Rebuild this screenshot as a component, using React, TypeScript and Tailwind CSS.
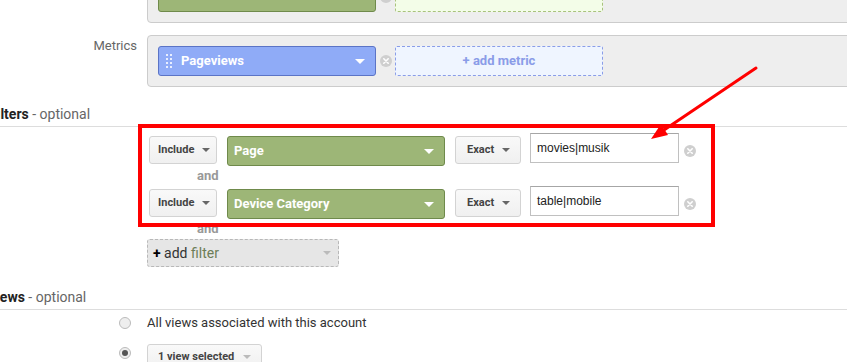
import React from "react";

function RemoveIcon() {
  return (
    <svg width="12" height="12" viewBox="0 0 12 12" className="shrink-0">
      <circle cx="6" cy="6" r="6" fill="#cfcfcf" />
      <path d="M3.8 3.8L8.2 8.2M8.2 3.8L3.8 8.2" stroke="#fff" strokeWidth="1.6" strokeLinecap="round" />
    </svg>
  );
}

function DragDots() {
  return (
    <div className="grid grid-cols-2 gap-x-[2px] gap-y-[2px] w-[6px]">
      {Array.from({ length: 8 }).map((_, i) => (
        <span key={i} className="w-[2px] h-[2px] bg-[#e8eeff]" />
      ))}
    </div>
  );
}

function DarkCaret() {
  return <span className="w-0 h-0 border-l-[4px] border-r-[4px] border-t-[4px] border-l-transparent border-r-transparent border-t-[#666]" />;
}

function WhiteCaret() {
  return <span className="w-0 h-0 border-l-[5px] border-r-[5px] border-t-[5px] border-l-transparent border-r-transparent border-t-white" />;
}

function LightCaret() {
  return <span className="w-0 h-0 border-l-[4px] border-r-[4px] border-t-[4px] border-l-transparent border-r-transparent border-t-[#bbb]" />;
}

function FilterRow({ field, value }: { field: string; value: string }) {
  return (
    <div className="flex items-start h-[33px]">
      <div className="ml-[2px] mt-[3px] w-[68px] h-[28px] flex items-center justify-between pl-[8px] pr-[6px] bg-linear-to-b from-[#f9f9f9] to-[#f0f0f0] border border-[#d3d3d3] rounded-[3px] text-[11px] font-bold text-[#444]">
        <span>Include</span>
        <DarkCaret />
      </div>
      <div className="ml-[10px] mt-[3px] w-[218px] h-[30px] flex items-center justify-between pl-[6px] pr-[10px] bg-[#9db677] border border-[#6f8a4b] rounded-[3px] text-[13px] font-bold text-white">
        <span>{field}</span>
        <WhiteCaret />
      </div>
      <div className="ml-[10px] mt-[3px] w-[66px] h-[28px] flex items-center justify-between pl-[11px] pr-[10px] bg-linear-to-b from-[#f9f9f9] to-[#f0f0f0] border border-[#d3d3d3] rounded-[3px] text-[11px] font-bold text-[#444]">
        <span>Exact</span>
        <DarkCaret />
      </div>
      <div className="ml-[9px] w-[149px] h-[30px] flex items-center px-[6px] bg-white border border-[#c0c0c0] border-t-[#a6a6a6] text-[12px] text-[#222] font-['Liberation_Sans',sans-serif]">
        {value}
      </div>
      <div className="ml-[5px] mt-[12px]">
        <RemoveIcon />
      </div>
    </div>
  );
}

export default function App() {
  return (
    <div className="relative w-[847px] h-[362px] overflow-hidden bg-white font-['Roboto',sans-serif]">
      <div className="-mt-[29px]">
        {/* Dimensions row (cut off) */}
        <div className="flex">
          <div className="w-[137px] shrink-0" />
          <div className="ml-[10px] flex-1 -mr-[20px] h-[52px] border border-[#cccccc] rounded-[4px] bg-[#eeeeee] px-[10px] flex items-center">
            <div className="w-[218px] h-[30px] flex items-center pl-[7px] pb-[9px] bg-[#9db677] border border-[#6f8a4b] rounded-[3px] text-[13px] font-bold text-white">
              <DragDots />
              <span className="ml-[9px]">Country</span>
            </div>
            <div className="ml-[4px]">
              <RemoveIcon />
            </div>
            <div className="ml-[3px] w-[208px] h-[30px] bg-[#f3fde8] border border-dashed border-[#a9c27d] rounded-[2px]" />
          </div>
        </div>

        {/* Metrics row */}
        <div className="flex mt-[12px]">
          <div className="w-[137px] shrink-0 text-right text-[13px] text-[#666] leading-[20px] pt-[1px]">Metrics</div>
          <div className="ml-[10px] flex-1 -mr-[20px] h-[52px] border border-[#cccccc] rounded-[4px] bg-[#eeeeee] px-[10px] flex items-center">
            <div className="w-[218px] h-[30px] flex items-center justify-between pl-[7px] pr-[10px] bg-[#8fabf7] border border-[#5b74c6] rounded-[3px] text-[13px] font-bold text-white">
              <div className="flex items-center">
                <DragDots />
                <span className="ml-[9px]">Pageviews</span>
              </div>
              <WhiteCaret />
            </div>
            <div className="ml-[4px]">
              <RemoveIcon />
            </div>
            <div className="ml-[3px] w-[208px] h-[30px] flex items-center justify-center bg-[#eff5ff] border border-dashed border-[#8a9de8] rounded-[2px] text-[13px] font-bold text-[#8a9ce8]">
              + add metric
            </div>
          </div>
        </div>

        {/* Filters heading */}
        <div className="mt-[17px] -ml-[11px] h-[23px] border-b border-[#dddddd] text-[14px] leading-[20px]">
          <span className="font-bold text-[#222]">Filters</span>
          <span className="text-[#666]"> - optional</span>
        </div>

        {/* Filters */}
        <div className="flex flex-col pl-[147px] mt-[6px]">
          <FilterRow field="Page" value="movies|musik" />
          <div className="h-[20px] leading-[20px] ml-[50px] text-[13px] font-bold text-[#999]">and</div>
          <FilterRow field="Device Category" value="table|mobile" />
          <div className="h-[20px] leading-[20px] ml-[50px] text-[13px] font-bold text-[#999]">and</div>
          <div className="w-[192px] h-[28px] flex items-center justify-between pl-[5px] pr-[7px] bg-[#e6e6e6] border border-dashed border-[#b8b8b8] rounded-[3px] text-[14px]">
            <span>
              <span className="font-bold text-black">+</span>
              <span className="text-[#333]"> add </span>
              <span className="text-[#6c7d57]">filter</span>
            </span>
            <LightCaret />
          </div>
        </div>

        {/* Views heading */}
        <div className="mt-[20px] -ml-[13px] h-[23px] border-b border-[#dddddd] text-[14px] leading-[20px]">
          <span className="font-bold text-[#222]">Views</span>
          <span className="text-[#666]"> - optional</span>
        </div>

        <div className="flex items-start mt-[3px] pl-[119px]">
          <span className="mt-[4px] w-[12px] h-[12px] rounded-full border border-[#bbb] bg-[#eeeeee]" />
          <span className="ml-[16px] text-[13px] leading-[20px] text-[#333]">All views associated with this account</span>
        </div>
        <div className="flex items-start mt-[11px] pl-[119px]">
          <span className="mt-[3px] w-[12px] h-[12px] rounded-full border border-[#bbb] bg-[#eeeeee] flex items-center justify-center">
            <span className="w-[6px] h-[6px] rounded-full bg-[#555]" />
          </span>
          <div className="ml-[16px] w-[115px] h-[26px] flex items-center justify-between pl-[10px] pr-[10px] bg-linear-to-b from-[#f9f9f9] to-[#f0f0f0] border border-[#d3d3d3] rounded-[3px] text-[11px] font-bold text-[#444]">
            <span>1 view selected</span>
            <LightCaret />
          </div>
        </div>
      </div>

      {/* Annotation box */}
      <div className="absolute left-[138px] top-[124px] w-[577px] h-[103px] border-[4px] border-[#ff0000] pointer-events-none" />

      {/* Annotation arrow */}
      <svg className="absolute inset-0 pointer-events-none" width="847" height="362" viewBox="0 0 847 362">
        <line x1="756" y1="68" x2="664" y2="130" stroke="#ff0000" strokeWidth="3" strokeLinecap="round" />
        <polygon points="651,139 668,135 661,124" fill="#ff0000" />
      </svg>
    </div>
  );
}
